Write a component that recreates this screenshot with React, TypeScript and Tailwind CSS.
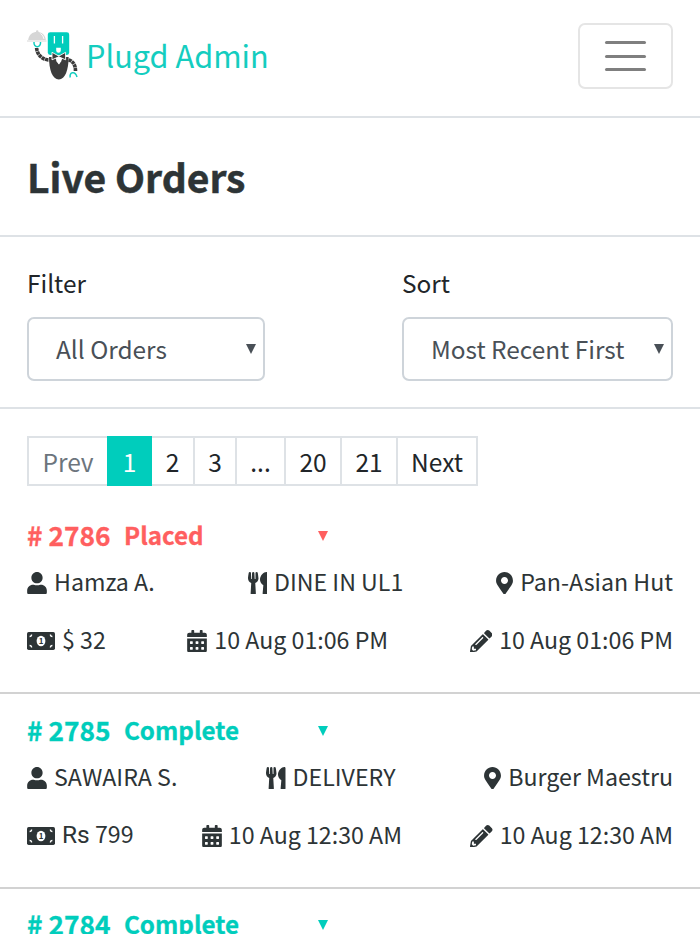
import React, { useState } from "react";
import {
  FaCalendarAlt,
  FaMapMarkerAlt,
  FaPencilAlt,
  FaUser,
  FaUtensils,
} from "react-icons/fa";

type OrderStatus = "Placed" | "Complete";

interface Order {
  id: number;
  status: OrderStatus;
  customer: string;
  type: string;
  restaurant: string;
  currency: string;
  amount: number;
  createdAt: string;
  updatedAt: string;
}

const ORDERS: Order[] = [
  {
    id: 2786,
    status: "Placed",
    customer: "Hamza A.",
    type: "DINE IN UL1",
    restaurant: "Pan-Asian Hut",
    currency: "$",
    amount: 32,
    createdAt: "10 Aug 01:06 PM",
    updatedAt: "10 Aug 01:06 PM",
  },
  {
    id: 2785,
    status: "Complete",
    customer: "SAWAIRA S.",
    type: "DELIVERY",
    restaurant: "Burger Maestru",
    currency: "Rs",
    amount: 799,
    createdAt: "10 Aug 12:30 AM",
    updatedAt: "10 Aug 12:30 AM",
  },
];

const NEXT_ORDER: Pick<Order, "id" | "status"> = { id: 2784, status: "Complete" };

const STATUS_COLORS: Record<OrderStatus, string> = {
  Placed: "text-[#ff5f5f]",
  Complete: "text-[#00cdbc]",
};

const PAGES = [
  { label: "Prev", width: "w-[78px]" },
  { label: "1", width: "w-[45px]" },
  { label: "2", width: "w-[43px]" },
  { label: "3", width: "w-[42px]" },
  { label: "...", width: "w-[49px]" },
  { label: "20", width: "w-[56px]" },
  { label: "21", width: "w-[56px]" },
  { label: "Next", width: "w-[80px]" },
];

function Logo() {
  return (
    <svg viewBox="0 0 51 50" className="h-[50px] w-[51px]" fill="none">
      {/* cloche */}
      <path d="M1.200 10C1.800 4.500 5.500 2 10 2s8.200 2.500 8.800 8z" fill="#d6d6d6" />
      <circle cx="10.200" cy="1.400" r="1.200" fill="#d6d6d6" />
      <path d="M0 11h19.500" stroke="#e4e4e4" strokeWidth="1.500" />
      <path d="M13.500 3.500q3 2 3.500 5.500" stroke="#fff" strokeWidth="0.900" />
      {/* arms */}
      <path d="M7 12c-.7 6.300 7.200 6.300 6.500 0" stroke="#14cdbf" strokeWidth="1.500" />
      <path d="M9.600 18c.4 6 5 11.500 12.500 12" stroke="#3c3c3c" strokeWidth="3.600" strokeDasharray="3.200 0.500" />
      <path d="M41.500 30c4 .8 7 4.500 7 11" stroke="#3c3c3c" strokeWidth="3.600" strokeDasharray="3.200 0.500" />
      <path d="M43.200 47.500c-1.200-5.500 5-7 6.800-.5" stroke="#14cdbf" strokeWidth="1.500" />
      {/* body */}
      <path d="M22 27c0 13 3.500 22.500 9.800 22.500S41.600 40 41.600 27z" fill="#3c3c3c" />
      <rect x="20.800" y="2.300" width="21.400" height="22.700" rx="2.400" fill="#00cdbc" />
      <path d="M27.400 6v7.600M35.600 6v7.600" stroke="#fff" strokeWidth="1.300" />
      <path d="M29.200 17.800h4.600v2.600a2.300 2.300 0 0 1-4.600 0z" fill="#fff" />
      {/* shirt and bow tie */}
      <path d="M26.500 25h11L32 34.500z" fill="#fff" />
      <path d="M25 22.300l6.800 3.800 6.800-3.800v7.500l-6.800-3-6.800 3z" fill="#3c3c3c" stroke="#fff" strokeWidth="0.900" />
      <path d="M30.500 27.500h2.600l1.400 3.500-2.700 3.300-2.700-3.300z" fill="#fff" />
    </svg>
  );
}

function Caret({ className }: { className: string }) {
  return (
    <svg viewBox="0 0 10 10" className={className} fill="currentColor">
      <path d="M0 0h10L5 10z" />
    </svg>
  );
}

function BanknoteIcon() {
  return (
    <svg viewBox="0 0 28 18" className="h-[18px] w-[28px]">
      <rect width="28" height="18" rx="1.700" fill="currentColor" />
      <path
        d="M2.600 4.500a2 2 0 0 0 2-2M25.400 4.500a2 2 0 0 1-2-2M2.600 13.500a2 2 0 0 1 2 2M25.400 13.500a2 2 0 0 0-2 2"
        fill="none"
        stroke="#fff"
        strokeWidth="1.300"
      />
      <ellipse cx="14" cy="9" rx="4.400" ry="5.200" fill="#fff" />
      <text x="14" y="11.900" textAnchor="middle" fontSize="8" fontWeight="700" fill="currentColor">
        1
      </text>
    </svg>
  );
}

function SelectBox({ label, value, width }: { label: string; value: string; width: string }) {
  return (
    <div className={width}>
      <div className="h-[32px] text-[24.400px] leading-[32px] text-[#212529]">{label}</div>
      <button className="mt-[18px] flex h-[64px] w-full items-center justify-between rounded-[7px] border-2 border-[#ced4da] pl-[27px] pr-[7px] text-[24.400px] text-[#495057]">
        <span className="leading-[32px]">{value}</span>
        <Caret className="h-[10px] w-[10px]" />
      </button>
    </div>
  );
}

function Pagination() {
  const [current, setCurrent] = useState("1");

  return (
    <nav className="flex h-[50px] w-fit border-y-2 border-l-2 border-[#dee2e6] text-[24.500px]">
      {PAGES.map(({ label, width }) => (
        <button
          key={label}
          onClick={() => setCurrent(label)}
          className={`${width} ${
            label === current
              ? "-my-[2px] bg-[#00cdbc] text-white"
              : label === "Prev"
                ? "text-[#6c757d]"
                : "border-r-2 border-[#dee2e6] text-[#212529]"
          } flex items-center justify-center pt-[1px] leading-[32px]`}
        >
          {label}
        </button>
      ))}
    </nav>
  );
}

function Detail({ icon, children }: { icon: React.ReactNode; children: React.ReactNode }) {
  return (
    <div className="flex items-center gap-[7px] whitespace-nowrap">
      {icon}
      <span className="pb-[4px] leading-[32px]">{children}</span>
    </div>
  );
}

function OrderHeading({ id, status }: Pick<Order, "id" | "status">) {
  return (
    <div
      className={`flex h-[34px] items-center font-bold leading-[34px] [-webkit-text-stroke:0.300px_currentColor] ${STATUS_COLORS[status]}`}
    >
      <span className="w-[97px] pb-[3px] text-[26.300px]"># {id}</span>
      <span className="w-[194px] pb-[3px] text-[24.200px]">{status}</span>
      <Caret className="h-[10px] w-[10px]" />
    </div>
  );
}

function OrderRow({ order }: { order: Order }) {
  return (
    <article className="h-[195px] border-b-2 border-[#d2d2d2] px-[27px] pt-[20px] text-[#2d3436]">
      <OrderHeading id={order.id} status={order.status} />
      <div className="mt-[14px] flex h-[32px] items-center justify-between text-[23.200px]">
        <Detail icon={<FaUser className="h-[22.500px] w-[20px]" />}>{order.customer}</Detail>
        <Detail icon={<FaUtensils preserveAspectRatio="none" className="h-[22.500px] w-[19.500px]" />}>
          {order.type}
        </Detail>
        <Detail icon={<FaMapMarkerAlt className="h-[22.500px] w-[17px]" />}>{order.restaurant}</Detail>
      </div>
      <div className="mt-[26px] flex h-[32px] items-center justify-between text-[23.200px]">
        <Detail icon={<BanknoteIcon />}>
          <span className={order.currency === "Rs" ? "font-['Roboto'] text-[24.500px]" : ""}>
            {order.currency}
          </span>{" "}
          {order.amount}
        </Detail>
        <Detail icon={<FaCalendarAlt className="h-[22.500px] w-[20px]" />}>{order.createdAt}</Detail>
        <Detail icon={<FaPencilAlt className="h-[22.500px] w-[22.500px]" />}>{order.updatedAt}</Detail>
      </div>
    </article>
  );
}

export default function App() {
  return (
    <div className="h-[934px] w-[700px] overflow-hidden bg-white font-['Noto_Sans_CJK_SC','Noto_Sans',sans-serif]">
      <header className="flex h-[118px] items-start justify-between border-b-2 border-[#dee2e6] px-[27px] pt-[23px]">
        <div className="flex items-center pt-[1px] text-[#14cdbf]">
          <Logo />
          <span className="ml-[8px] text-[30.700px] leading-[62px]">Plugd Admin</span>
        </div>
        <button className="flex h-[66px] w-[95px] flex-col items-center justify-center gap-[10.500px] rounded-[7px] border-2 border-[#e5e5e5]">
          <span className="h-[3px] w-[41px] rounded-full bg-[#7f7f7f]" />
          <span className="h-[3px] w-[41px] rounded-full bg-[#7f7f7f]" />
          <span className="h-[3px] w-[41px] rounded-full bg-[#7f7f7f]" />
        </button>
      </header>

      <div className="flex h-[119px] items-center border-b-2 border-[#dee2e6] px-[27px]">
        <h1 className="pb-[1px] text-[39px] font-bold leading-[50px] text-[#2d3436] [-webkit-text-stroke:0.500px_#2d3436]">
          Live Orders
        </h1>
      </div>

      <section className="flex h-[172px] justify-between border-b-2 border-[#dee2e6] px-[27px] pt-[30px]">
        <SelectBox label="Filter" value="All Orders" width="w-[238px]" />
        <SelectBox label="Sort" value="Most Recent First" width="w-[271px]" />
      </section>

      <div className="px-[27px] pt-[27px]">
        <Pagination />
      </div>

      <main className="pt-[13px]">
        {ORDERS.map((order) => (
          <OrderRow key={order.id} order={order} />
        ))}
        <div className="px-[27px] pt-[19px]">
          <OrderHeading id={NEXT_ORDER.id} status={NEXT_ORDER.status} />
        </div>
      </main>
    </div>
  );
}
